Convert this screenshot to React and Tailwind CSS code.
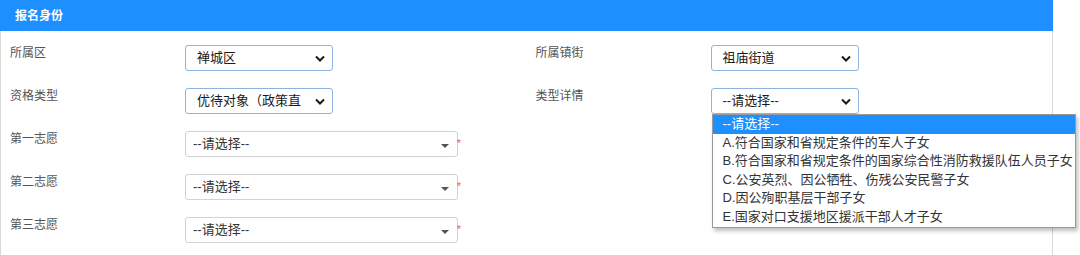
import React from 'react';

const font = { fontFamily: '"Liberation Sans", "Noto Sans CJK SC", sans-serif' };

const typeDetails = [
  '--请选择--',
  'A.符合国家和省规定条件的军人子女',
  'B.符合国家和省规定条件的国家综合性消防救援队伍人员子女',
  'C.公安英烈、因公牺牲、伤残公安民警子女',
  'D.因公殉职基层干部子女',
  'E.国家对口支援地区援派干部人才子女'
];

const Chevron = () => (
  <svg width="10" height="7" viewBox="0 0 10 7" className="shrink-0">
    <path d="M1 1.5l4 4 4-4" fill="none" stroke="#1a1a1a" strokeWidth="2" />
  </svg>
);

// native-looking select, optionally with its option list opened
const Select = ({ value, open }) => (
  <div className="relative w-[148px] h-[26px] rounded-[3px] border border-[#8fb3e0] bg-white flex items-center justify-between pl-[11px] pr-[7px] text-[13px] text-[#1a1a1a]">
    <span className="whitespace-nowrap">{value}</span>
    <Chevron />
    {open && (
      <ul className="absolute left-[0px] top-[25px] z-10 w-[364px] bg-white border border-[#9a9a9a] shadow-[2px_3px_4px_rgba(0,0,0,0.25)]">
        {typeDetails.map((item, i) => (
          <li
            key={item}
            className={`h-[18.6px] leading-[18.6px] pl-[10px] whitespace-nowrap text-[13px] ${
              i === 0 ? 'bg-[#1e8fff] text-white' : 'text-[#333]'
            }`}
          >
            {item}
          </li>
        ))}
      </ul>
    )}
  </div>
);

// searchable combo used for the three choices
const Combo = () => (
  <div className="relative w-[273px] h-[26px] rounded-[3px] border border-[#d2d2d2] bg-white flex items-center pl-[7px] text-[13px] text-[#333]">
    --请选择--
    <span className="absolute right-[8px] top-[12px] w-0 h-0 border-l-[4px] border-r-[4px] border-t-[4px] border-l-transparent border-r-transparent border-t-[#555]" />
    <span className="absolute right-[-4px] top-[6px] text-[11px] leading-none text-[#f26060]">*</span>
  </div>
);

const Field = ({ label, children }) => (
  <div className="w-[526px] flex items-start">
    <div className="w-[184px] shrink-0 pl-[9px] text-[12px] leading-[16px] text-[#555]">{label}</div>
    {children}
  </div>
);

export default function App() {
  return (
    <div className="w-[1080px] h-[255px] bg-white overflow-hidden" style={font}>
      <div className="w-[1053px] h-full flex flex-col">
        <div className="h-[31px] bg-[#1e8fff] flex items-center px-[15px] text-[12px] font-bold text-white">
          报名身份
        </div>
        <div className="flex-1 border-l border-r border-[#d9d9d9] pt-[14px] flex flex-col gap-[17px]">
          <div className="flex">
            <Field label="所属区">
              <Select value="禅城区" />
            </Field>
            <Field label="所属镇街">
              <Select value="祖庙街道" />
            </Field>
          </div>
          <div className="flex">
            <Field label="资格类型">
              <Select value="优待对象（政策直" />
            </Field>
            <Field label="类型详情">
              <Select value="--请选择--" open />
            </Field>
          </div>
          <div className="flex">
            <Field label="第一志愿">
              <Combo />
            </Field>
          </div>
          <div className="flex">
            <Field label="第二志愿">
              <Combo />
            </Field>
          </div>
          <div className="flex">
            <Field label="第三志愿">
              <Combo />
            </Field>
          </div>
        </div>
      </div>
    </div>
  );
}
